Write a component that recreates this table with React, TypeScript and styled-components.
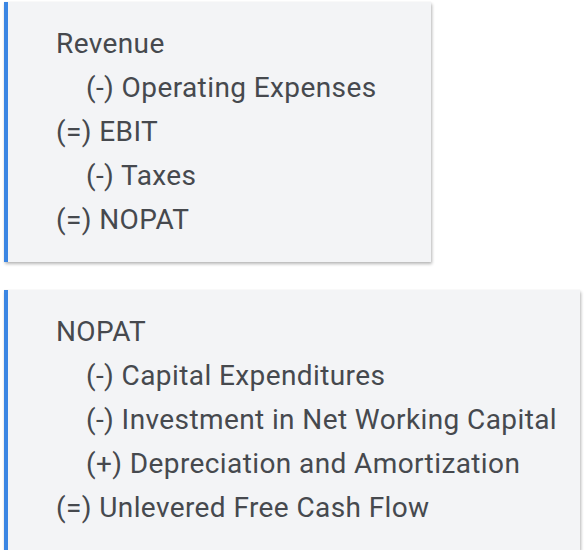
import React from "react";
import styled, { createGlobalStyle } from "styled-components";

const Global = createGlobalStyle`
  html, body { margin: 0; padding: 0; background: #ffffff; }
  body { font-family: Roboto, "Noto Sans", sans-serif; }
`;

const Page = styled.div`
  display: flex;
  flex-direction: column;
  align-items: flex-start;
  gap: 28px;
  padding: 2px 0 0 4px;
`;

const Card = styled.div<{ $width: number }>`
  box-sizing: border-box;
  width: ${(p) => p.$width}px;
  background: #f3f4f6;
  border-left: 4px solid #3b86e3;
  box-shadow: 1px 2px 3px rgba(0, 0, 0, 0.28), 0 0 1px rgba(0, 0, 0, 0.08);
  padding: 20px 0 20px 48px;
  display: flex;
  flex-direction: column;
`;

const Line = styled.div<{ $indent?: boolean }>`
  font-size: 28px;
  letter-spacing: 0.4px;
  line-height: 44px;
  color: #46494e;
  white-space: nowrap;
  padding-left: ${(p) => (p.$indent ? 30 : 0)}px;
`;

const cards: { width: number; lines: [string, boolean][] }[] = [
  {
    width: 427,
    lines: [
      ["Revenue", false],
      ["(-) Operating Expenses", true],
      ["(=) EBIT", false],
      ["(-) Taxes", true],
      ["(=) NOPAT", false],
    ],
  },
  {
    width: 576,
    lines: [
      ["NOPAT", false],
      ["(-) Capital Expenditures", true],
      ["(-) Investment in Net Working Capital", true],
      ["(+) Depreciation and Amortization", true],
      ["(=) Unlevered Free Cash Flow", false],
    ],
  },
];

export default function App() {
  return (
    <>
      <Global />
      <Page>
        {cards.map((c, i) => (
          <Card key={i} $width={c.width}>
            {c.lines.map(([t, ind], j) => (
              <Line key={j} $indent={ind}>
                {t}
              </Line>
            ))}
          </Card>
        ))}
      </Page>
    </>
  );
}
